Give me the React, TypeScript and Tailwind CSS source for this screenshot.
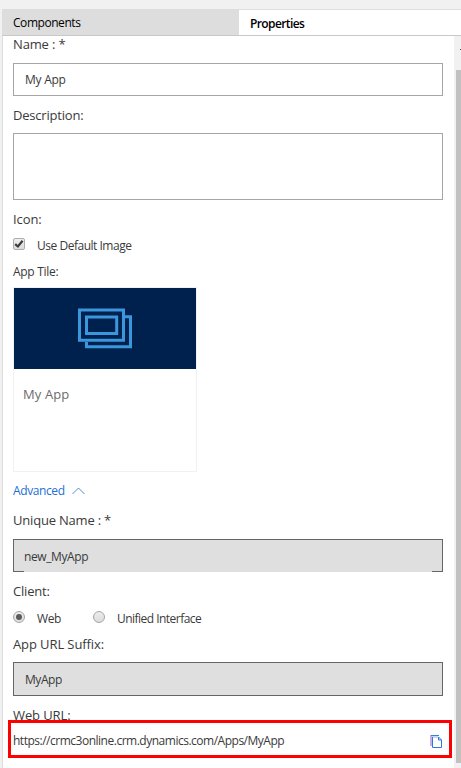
import type { ReactNode } from 'react';

function Label({ className = '', children }: { className?: string; children: ReactNode }) {
  return <div className={`h-5 whitespace-nowrap text-[13px] leading-5 text-[#3a3a3a] ${className}`}>{children}</div>;
}

function Radio({ checked = false }: { checked?: boolean }) {
  return (
    <span className="flex size-3 shrink-0 items-center justify-center rounded-full border border-[#a6a6a6] bg-linear-to-b from-[#ececec] to-[#dcdcdc]">
      {checked && <span className="size-1.5 rounded-full bg-[#5b5b5b]" />}
    </span>
  );
}

export default function App() {
  return (
    <div className="relative flex h-[768px] w-[461px] flex-col overflow-hidden bg-[#f1f1f1] pl-0.5 pt-[9px] font-['Open_Sans','Noto_Sans',sans-serif]">
      <div className="flex h-[27px] shrink-0 border-b border-t border-b-[#c9c9c9] border-t-[#dddddd] bg-white text-[12px] leading-[26px] text-black">
        <div className="w-[237px] bg-[#dddddd] pl-[11px]">
          <span className="tracking-[-0.45px]">Components</span>
        </div>
        <div className="pl-[11px] pt-px font-semibold">
          <span className="tracking-[-0.6px]">Properties</span>
        </div>
      </div>

      <div className="flex min-h-0 flex-1">
        <main className="flex w-[452px] shrink-0 flex-col border-l border-[#dddddd] bg-white pl-2.5 pr-[11px]">
          <Label className="-mt-0.5">
            <span className="tracking-[-0.15px]">Name : *</span>
          </Label>
          <div className="mt-[9px] h-[33px] w-[430px] shrink-0 border border-[#a6a6a6] pl-[11px] text-[12px] leading-[32px] text-[#3a3a3a]">
            <span className="tracking-[-0.25px]">My App</span>
          </div>
          <Label className="mt-[9px]">
            <span className="tracking-[-0.2px]">Description:</span>
          </Label>
          <div className="mt-2 h-[67px] w-[430px] shrink-0 border border-[#a6a6a6]" />
          <Label className="mt-[9px]">
            <span className="tracking-[-0.1px]">Icon:</span>
          </Label>
          <div className="mt-[9px] flex h-3 items-center">
            <span className="flex size-3 items-center justify-center rounded-[2px] border border-[#adadad] bg-linear-to-b from-[#eeeeee] to-[#dcdcdc]">
              <svg width="10" height="10" viewBox="0 0 10 10" fill="none" stroke="#3c3c3c" strokeWidth="2.2">
                <path d="M1.2 5.2 3.9 7.5 8.6 1.8" />
              </svg>
            </span>
            <span className="mt-[3px] pl-3 text-[12px] leading-4 tracking-[-0.48px] text-[#3a3a3a]">Use Default Image</span>
          </div>
          <div className="mt-3 h-5 text-[12px] leading-5 text-[#3a3a3a]">
            <span className="tracking-[-0.3px]">App Tile:</span>
          </div>
          <div className="mt-[5px] h-[185px] w-[184px] shrink-0 border border-[#f1f1f1]">
            <div className="flex h-[81px] justify-center bg-[#00204d] pt-5">
              <svg width="54" height="41" viewBox="0 0 54 41" fill="none" stroke="#3a96dd" strokeWidth="3">
                <path d="M1.5 1.9H45.5V32.3H1.5Z" />
                <path d="M8.5 9H38.7V25.5H8.5Z" />
                <path d="M47 8.7H52.5V38.8H8.5V34" />
              </svg>
            </div>
            <div className="pl-[9px] pt-[15px] text-[13px] leading-5 tracking-[0.1px] text-[#6c6c6c]">My App</div>
          </div>
          <div className="mt-[9px] flex h-5 items-center text-[12px] text-[#1c6fd8]">
            <span className="w-[59px] tracking-[-0.4px]">Advanced</span>
            <svg width="13" height="8" viewBox="0 0 13 8" fill="none" stroke="#4f8fdc" strokeWidth="1">
              <path d="M.5 7 6.5 1l6 6" />
            </svg>
          </div>
          <Label className="mt-[9px]">
            <span className="tracking-[-0.2px]">Unique Name : *</span>
          </Label>
          <div className="mt-[9px] flex h-[33px] w-[430px] shrink-0 flex-col border-x border-t border-[#666] bg-[#dfdfdf]">
            <div className="h-[31px] pl-2.5 pt-px text-[12px] leading-[32px] text-[#3a3a3a]">
              <span className="tracking-[-0.4px]">new_MyApp</span>
            </div>
            <div className="flex h-px justify-between">
              <span className="w-2.5 bg-[#666]" />
              <span className="w-2.5 bg-[#666]" />
            </div>
          </div>
          <Label className="mt-[9px]">
            <span className="tracking-[-0.2px]">Client:</span>
          </Label>
          <div className="mt-2.5 flex h-3 items-center text-[12px] leading-4 text-[#3a3a3a]">
            <Radio checked />
            <span className="mt-[3px] w-[68px] pl-3 tracking-[-0.4px]">Web</span>
            <Radio />
            <span className="mt-[3px] pl-3 tracking-[-0.53px]">Unified Interface</span>
          </div>
          <Label className="mt-[11px]">
            <span className="tracking-[-0.1px]">App URL Suffix:</span>
          </Label>
          <div className="mt-2 h-[34px] w-[430px] shrink-0 border border-[#666] bg-[#dfdfdf] pl-[11px] text-[12px] leading-[34px] text-[#3a3a3a]">
            <span className="tracking-[-0.45px]">MyApp</span>
          </div>
          <Label className="mt-[9px]">
            <span className="tracking-[-0.1px]">Web URL:</span>
          </Label>
          <div className="mt-1.5 flex h-5 w-[430px] items-center justify-between text-[12px] text-[#3a3a3a]">
            <span className="tracking-[-0.49px]">https://crmc3online.crm.dynamics.com/Apps/MyApp</span>
            <svg className="mr-px" width="12" height="13" viewBox="0 0 12 13" fill="none">
              <path d="M0 0h2v11H0z" fill="#c4b2e8" />
              <path d="M2 1h6v2H2z" fill="#c7d8f3" />
              <path d="M1 .5H9" stroke="#3a80d8" />
              <path d="M2.5 2V12.5H11.5V5L8.5 2V5H11.5" stroke="#2f78d7" />
            </svg>
          </div>
        </main>

        <div className="w-[7px] shrink-0 bg-[#f1f1f1] pl-0.5">
          <div className="flex h-[34px] justify-end pt-[13px]">
            <span className="h-px w-px bg-[#505050]" />
          </div>
          <div className="h-[693px] bg-[#c1c1c1]" />
        </div>
      </div>

      <div className="pointer-events-none absolute left-2 top-[720px] h-[38px] w-[444px] border-[3px] border-[#ff0000]" />
    </div>
  );
}
